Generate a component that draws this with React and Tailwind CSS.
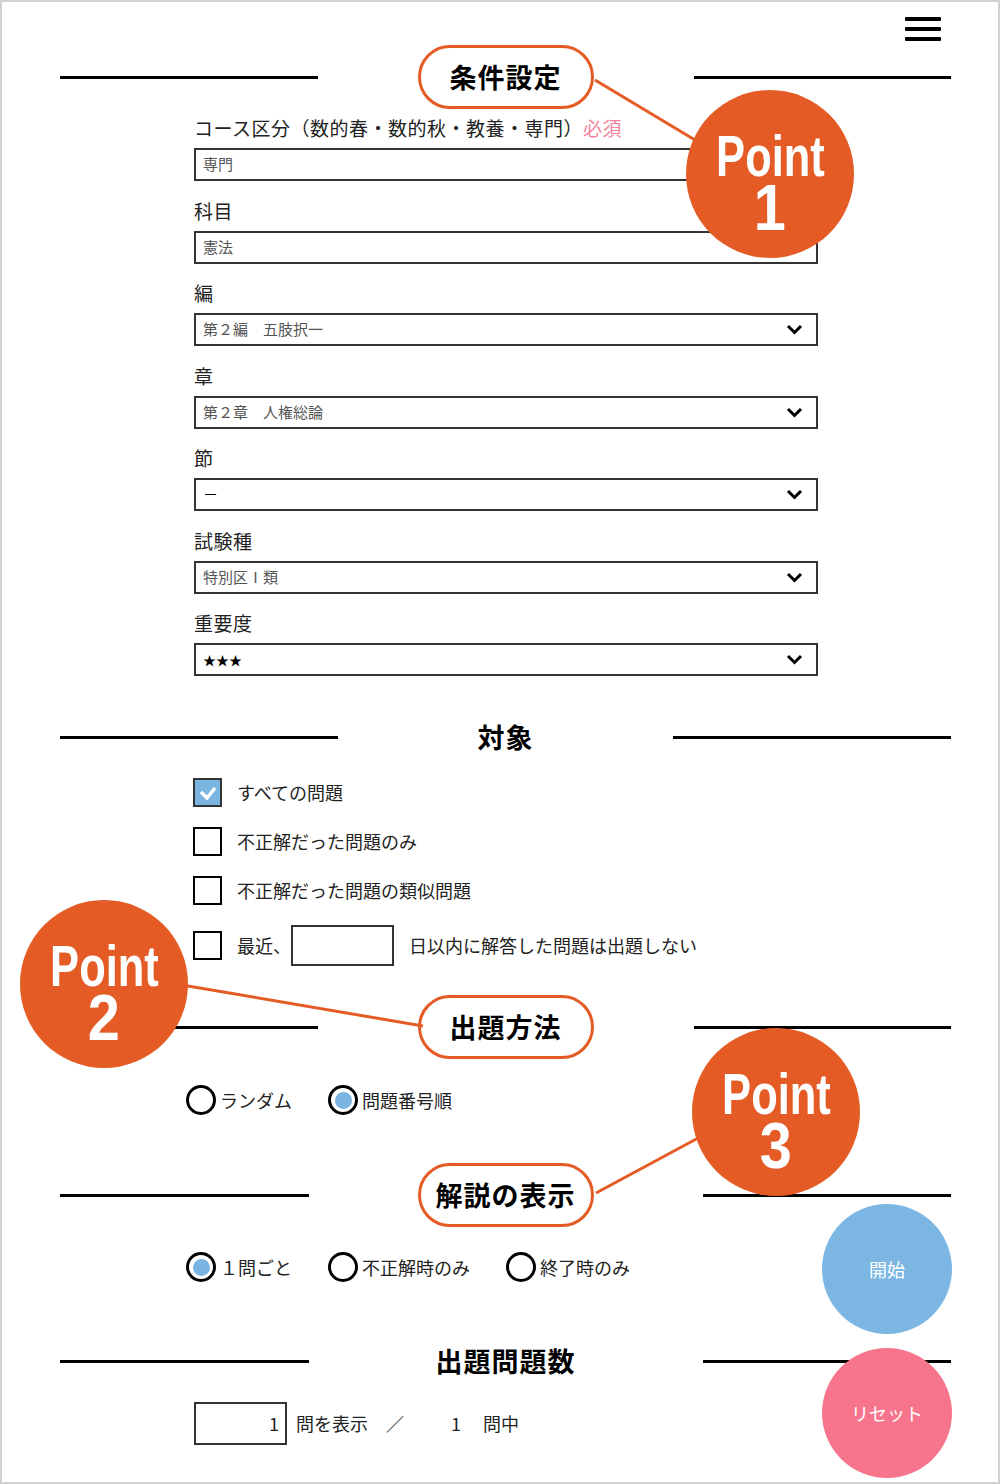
import React from "react";

const JP = { fontFamily: '"Noto Sans CJK JP", "Noto Sans", sans-serif' };
const ORANGE = "#e55b26";

const SectionHeader = ({ title, pill, centerClass }) => (
  <div className="flex items-center h-[64px] pl-[58px] pr-[47px]">
    <div className="flex-1 h-[3px] bg-black" />
    <div className={`${centerClass} flex justify-center`}>
      {pill ? (
        <div className="w-[176px] h-[64px] rounded-full border-[3px] border-[#e55b26] bg-white flex items-center justify-center text-[27px] font-bold text-black tracking-[1px]">
          {title}
        </div>
      ) : (
        <div className="text-[27px] font-bold text-black tracking-[1px]">{title}</div>
      )}
    </div>
    <div className="flex-1 h-[3px] bg-black" />
  </div>
);

const Chevron = () => (
  <svg width="17" height="11" viewBox="0 0 17 11" className="shrink-0">
    <polyline points="2,2 8.5,8.5 15,2" fill="none" stroke="#000" strokeWidth="3" />
  </svg>
);

const Field = ({ label, value, select, required, valueClass = "text-[#555] text-[15px]" }) => (
  <div>
    <div className="h-[24px] leading-[24px] text-[19px] text-[#222] tracking-[0.5px]">
      {label}
      {required && <span className="text-[#f5829a]">必須</span>}
    </div>
    <div className="mt-[8px] w-[624px] h-[33px] border-2 border-[#333] flex items-center justify-between pl-[7px] pr-[13px]">
      <span className={valueClass}>{value}</span>
      {select && <Chevron />}
    </div>
  </div>
);

const Checkbox = ({ checked }) =>
  checked ? (
    <div className="w-[29px] h-[29px] border-2 border-[#333] bg-[#7ab4e0] flex items-center justify-center shrink-0">
      <svg width="20" height="16" viewBox="0 0 20 16">
        <polyline points="3,7 9,13 17,3" fill="none" stroke="#fff" strokeWidth="3.5" />
      </svg>
    </div>
  ) : (
    <div className="w-[29px] h-[29px] border-2 border-black bg-white shrink-0" />
  );

const Radio = ({ checked, label }) => (
  <div className="flex items-center gap-[4px]">
    <div className="w-[30px] h-[30px] rounded-full border-[3px] border-black flex items-center justify-center">
      {checked && <div className="w-[17px] h-[17px] rounded-full bg-[#7ab4e0]" />}
    </div>
    <span className="text-[18px] text-[#222]">{label}</span>
  </div>
);

const PointBadge = ({ n, className }) => (
  <div
    className={`absolute w-[168px] h-[168px] rounded-full bg-[#e55b26] flex flex-col items-center justify-center pt-[18px] text-white font-bold ${className}`}
    style={{ fontFamily: '"Liberation Sans", Arial, sans-serif' }}
  >
    <span className="inline-block scale-x-75 text-[58px] leading-[50px]">Point</span>
    <span className="text-[64px] leading-[54px] scale-x-90 inline-block">{n}</span>
  </div>
);

const App = () => {
  return (
    <div className="relative w-[1000px] h-[1484px] border-2 border-[#d3d3d3] bg-white overflow-hidden" style={JP}>
      {/* hamburger */}
      <div className="flex justify-end pt-[15px] pr-[57px]">
        <div className="flex flex-col gap-[6px]">
          <span className="block w-[36px] h-[4px] bg-black rounded-[1px]" />
          <span className="block w-[36px] h-[4px] bg-black rounded-[1px]" />
          <span className="block w-[36px] h-[4px] bg-black rounded-[1px]" />
        </div>
      </div>

      <div className="mt-[4px]">
        <SectionHeader title="条件設定" pill centerClass="w-[376px]" />
      </div>

      <div className="mt-[7px] pl-[192px] flex flex-col gap-[17.5px]">
        <Field label="コース区分（数的春・数的秋・教養・専門）" required value="専門" />
        <Field label="科目" value="憲法" />
        <Field label="編" value="第２編　五肢択一" select />
        <Field label="章" value="第２章　人権総論" select />
        <Field label="節" value="－" select valueClass="text-black text-[15px]" />
        <Field label="試験種" value="特別区Ⅰ類" select />
        <Field label="重要度" value="★★★" select valueClass="text-black text-[13px]" />
      </div>

      <div className="mt-[29px]">
        <SectionHeader title="対象" centerClass="w-[335px]" />
      </div>

      <div className="mt-[9px] pl-[191px] flex flex-col gap-[20px] text-[18px] text-[#222]">
        <div className="flex items-center gap-[15px]">
          <Checkbox checked />
          <span>すべての問題</span>
        </div>
        <div className="flex items-center gap-[15px]">
          <Checkbox />
          <span>不正解だった問題のみ</span>
        </div>
        <div className="flex items-center gap-[15px]">
          <Checkbox />
          <span>不正解だった問題の類似問題</span>
        </div>
        <div className="flex items-center gap-[15px]">
          <Checkbox />
          <div className="flex items-center">
            <span>最近、</span>
            <div className="w-[103px] h-[41px] border-2 border-[#333]" />
          </div>
          <span>日以内に解答した問題は出題しない</span>
        </div>
      </div>

      <div className="mt-[29px]">
        <SectionHeader title="出題方法" pill centerClass="w-[376px]" />
      </div>

      <div className="mt-[26px] pl-[184px] flex items-center gap-[36px]">
        <Radio label="ランダム" />
        <Radio checked label="問題番号順" />
      </div>

      <div className="mt-[48px]">
        <SectionHeader title="解説の表示" pill centerClass="w-[394px]" />
      </div>

      <div className="mt-[25px] pl-[184px] flex items-center gap-[36px]">
        <Radio checked label="１問ごと" />
        <Radio label="不正解時のみ" />
        <Radio label="終了時のみ" />
      </div>

      <div className="mt-[47px]">
        <SectionHeader title="出題問題数" centerClass="w-[394px]" />
      </div>

      <div className="mt-[9px] pl-[192px] flex items-center text-[18px] text-[#222]">
        <div className="w-[93px] h-[43px] border-2 border-[#333] flex items-center justify-end pr-[6px]">1</div>
        <span className="ml-[9px]">問を表示　／</span>
        <span className="ml-[47px]">1</span>
        <span className="ml-[22px]">問中</span>
      </div>

      {/* connectors */}
      <svg className="absolute left-0 top-0 pointer-events-none" width="996" height="1480" viewBox="0 0 996 1480">
        <line x1="593" y1="78" x2="693" y2="138" stroke={ORANGE} strokeWidth="3" />
        <line x1="180" y1="983" x2="421" y2="1024" stroke={ORANGE} strokeWidth="3" />
        <line x1="698" y1="1135" x2="594" y2="1191" stroke={ORANGE} strokeWidth="3" />
      </svg>

      <PointBadge n="1" className="left-[684px] top-[88px]" />
      <PointBadge n="2" className="left-[18px] top-[898px]" />
      <PointBadge n="3" className="left-[690px] top-[1026px]" />

      <button className="absolute left-[820px] top-[1202px] w-[130px] h-[130px] rounded-full bg-[#7cb7e3] text-white text-[18px] flex items-center justify-center">
        開始
      </button>
      <button className="absolute left-[820px] top-[1346px] w-[130px] h-[130px] rounded-full bg-[#f7758c] text-white text-[18px] flex items-center justify-center">
        リセット
      </button>
    </div>
  );
};

export default App;
